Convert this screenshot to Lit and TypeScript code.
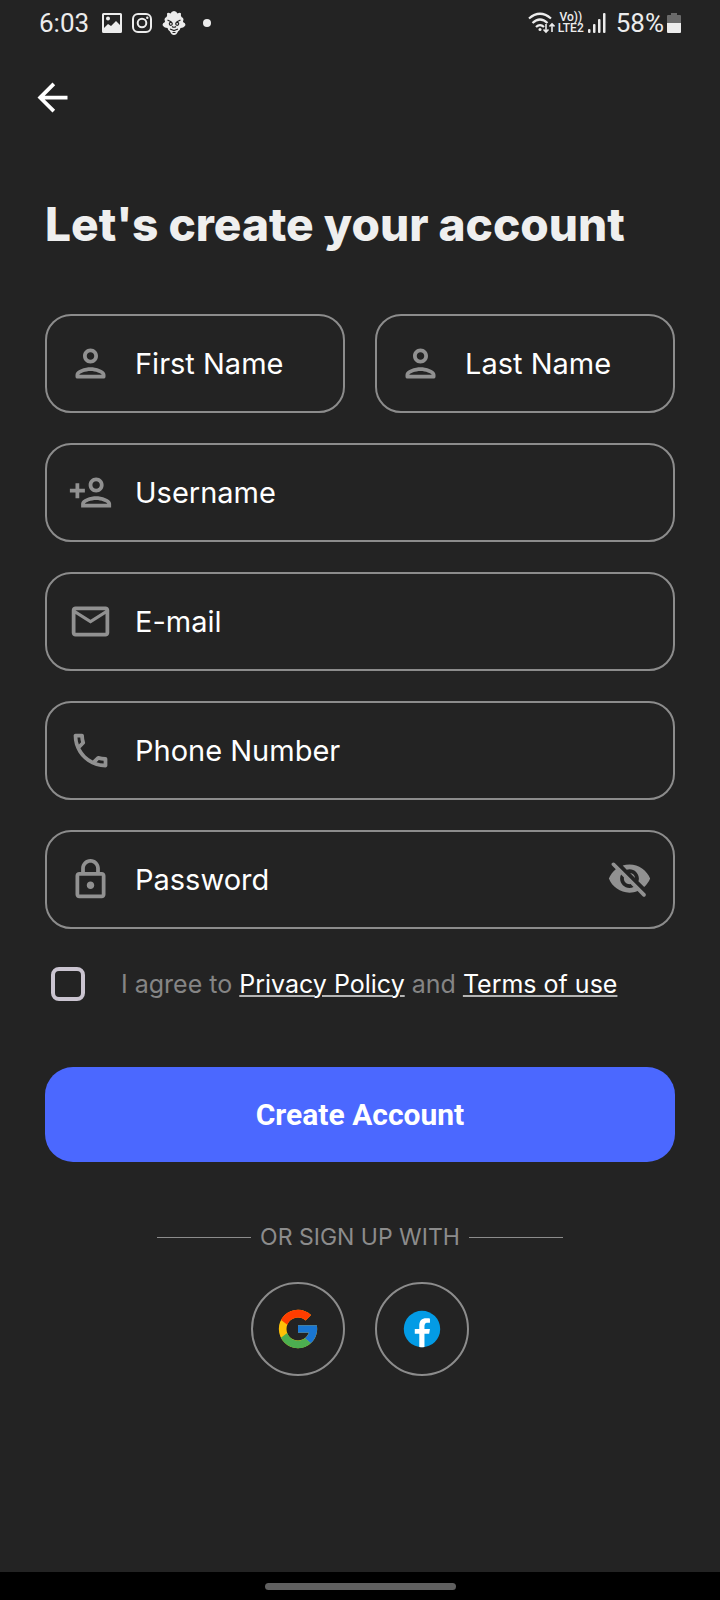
import { LitElement, html, css, svg } from "lit";
import { customElement, property, state } from "lit/decorators.js";

const ICONS: Record<string, string> = {
  back: "M20 11H7.83l5.59-5.59L12 4l-8 8 8 8 1.41-1.41L7.83 13H20v-2z",
  person:
    "M12 6c1.1 0 2 .9 2 2s-.9 2-2 2-2-.9-2-2 .9-2 2-2m0 10c2.7 0 5.8 1.29 6 2H6c.23-.72 3.31-2 6-2m0-12C9.79 4 8 5.79 8 8s1.79 4 4 4 4-1.79 4-4-1.79-4-4-4zm0 10c-2.67 0-8 1.34-8 4v1c0 .55.45 1 1 1h14c.55 0 1-.45 1-1v-1c0-2.66-5.33-4-8-4z",
  personAdd:
    "M15 12c2.21 0 4-1.79 4-4s-1.79-4-4-4-4 1.79-4 4 1.79 4 4 4zm0-6c1.1 0 2 .9 2 2s-.9 2-2 2-2-.9-2-2 .9-2 2-2zm0 8c-2.67 0-8 1.34-8 4v2h16v-2c0-2.66-5.33-4-8-4zm-6 4c.22-.72 3.31-2 6-2 2.7 0 5.8 1.29 6 2H9zm-3-3v-3h3v-2H6V7H4v3H1v2h3v3h2z",
  mail: "M20 4H4c-1.1 0-2 .9-2 2v12c0 1.1.9 2 2 2h16c1.1 0 2-.9 2-2V6c0-1.1-.9-2-2-2zm0 14H4V8l8 5 8-5v10zm-8-7L4 6h16l-8 5z",
  phone:
    "M6.54 5c.06.89.21 1.76.45 2.59l-1.2 1.2c-.41-1.2-.67-2.47-.76-3.79h1.51m9.86 12.02c.85.24 1.72.39 2.6.45v1.49c-1.32-.09-2.59-.35-3.8-.75l1.2-1.19M7.5 3H4c-.55 0-1 .45-1 1 0 9.39 7.61 17 17 17 .55 0 1-.45 1-1v-3.49c0-.55-.45-1-1-1-1.24 0-2.45-.2-3.57-.57-.1-.04-.21-.05-.31-.05-.26 0-.51.1-.71.29l-2.2 2.2c-2.83-1.45-5.15-3.76-6.59-6.59l2.2-2.2c.28-.28.36-.67.25-1.02C8.7 6.45 8.5 5.25 8.5 4c0-.55-.45-1-1-1z",
  lock: "M18 8h-1V6c0-2.76-2.24-5-5-5S7 3.24 7 6v2H6c-1.1 0-2 .9-2 2v10c0 1.1.9 2 2 2h12c1.1 0 2-.9 2-2V10c0-1.1-.9-2-2-2zM9 6c0-1.66 1.34-3 3-3s3 1.34 3 3v2H9V6zm9 14H6V10h12v10zm-6-3c1.1 0 2-.9 2-2s-.9-2-2-2-2 .9-2 2 .9 2 2 2z",
  eyeOff:
    "M12 6.5c2.76 0 5 2.24 5 5 0 .51-.1 1-.24 1.46l3.06 3.06c1.39-1.23 2.49-2.77 3.18-4.53C21.27 7.11 17 4 12 4c-1.27 0-2.49.2-3.64.57l2.17 2.17c.47-.14.96-.24 1.47-.24zM2.71 3.16c-.39.39-.39 1.02 0 1.41l1.97 1.97C3.06 7.83 1.77 9.53 1 11.5 2.73 15.89 7 19 12 19c1.52 0 2.97-.3 4.31-.82l2.72 2.72c.39.39 1.02.39 1.41 0 .39-.39.39-1.02 0-1.41L4.13 3.16c-.39-.39-1.03-.39-1.42 0zM12 16.5c-2.76 0-5-2.24-5-5 0-.77.18-1.5.49-2.14l1.57 1.57c-.03.18-.06.37-.06.57 0 1.66 1.34 3 3 3 .2 0 .38-.03.57-.07L14.14 16c-.65.32-1.37.5-2.14.5zm2.97-5.33c-.15-1.4-1.25-2.49-2.64-2.64l2.64 2.64z",
  eye: "M12 4C7 4 2.73 7.11 1 11.5 2.73 15.89 7 19 12 19s9.27-3.11 11-7.5C21.27 7.11 17 4 12 4zm0 12.5c-2.76 0-5-2.24-5-5s2.24-5 5-5 5 2.24 5 5-2.24 5-5 5zm0-8c-1.66 0-3 1.34-3 3s1.34 3 3 3 3-1.34 3-3-1.34-3-3-3z",
};

const icon = (name: string) => html`
  <svg class="icon" viewBox="0 0 24 24" aria-hidden="true">
    ${svg`<path fill="currentColor" d=${ICONS[name]} />`}
  </svg>
`;

@customElement("status-bar")
class StatusBar extends LitElement {
  static styles = css`
    :host {
      display: flex;
      align-items: center;
      justify-content: space-between;
      height: 45px;
      padding: 0 39px;
      color: #ececec;
      font: 400 26px/32px Roboto, sans-serif;
    }
    .side {
      display: flex;
      align-items: center;
      gap: 10px;
    }
    .side.end {
      gap: 3px;
    }
    svg {
      display: block;
      flex: none;
    }
    .time {
      margin-right: 3px;
    }
    .dot {
      width: 8px;
      height: 8px;
      margin-left: 7px;
      border-radius: 50%;
      background: currentColor;
    }
    .volte {
      display: grid;
      justify-items: center;
      font: 500 12px/11px Roboto, sans-serif;
    }
    .percent {
      margin-left: 6px;
    }
  `;

  render() {
    return html`
      <div class="side">
        <span class="time">6:03</span>
        <svg width="20" height="20" viewBox="0 0 20 20" aria-hidden="true">
          <path
            fill="currentColor"
            fill-rule="evenodd"
            d="M1.500 0h17Q20 0 20 1.500v17q0 1.500-1.500 1.500h-17Q0 20 0 18.500v-17Q0 0 1.500 0zM2 2v13l4-4 3 2 5-5 4 4V2zM4 5.500a2 2 0 1 0 4 0 2 2 0 1 0-4 0z"
          />
        </svg>
        <svg width="20" height="20" viewBox="0 0 20 20" fill="none" stroke="currentColor" stroke-width="2" aria-hidden="true">
          <rect x="1" y="1" width="18" height="18" rx="5" />
          <circle cx="10" cy="10" r="4.300" />
          <circle cx="15.300" cy="4.700" r="1.200" fill="currentColor" stroke="none" />
        </svg>
        <svg width="24" height="24" viewBox="0 0 24 24" aria-hidden="true">
          <path
            fill="currentColor"
            d="M12 0q2.500 0 3.500 2.500Q18 1 19 2.500q-.5 2 .5 3.500 2 .5 2 2.500-.5 1.500-.5 2.500 2.500 1 2.500 3-1.500 3-5 3-.5 2.500-2.500 3.500Q14.500 24 12 24t-4-3.500Q6 19.500 5.500 17 2 17 .5 14q0-2 2.500-3 0-1-.5-2.500 0-2 2-2.500 1-1.500.5-3.500Q6 1 8.500 2.500 9.500 0 12 0z"
          />
          <g fill="none" stroke="#232323" stroke-width="1.200">
            <path d="M5.500 9l4 2M18.500 9l-4 2M10 15.500q2 1.500 4 0M8 18l4 1.500 4-1.500M10.500 21.500h3" />
            <circle cx="8.800" cy="12.800" r="1.500" />
            <circle cx="15.200" cy="12.800" r="1.500" />
          </g>
        </svg>
        <span class="dot"></span>
      </div>
      <div class="side end">
        <svg width="27" height="22" viewBox="0 0 27 22" fill="none" stroke="currentColor" stroke-width="2.200" aria-hidden="true">
          <path d="M1 6.500Q12 -3 23 6.500M4.500 11Q12 4 19.500 11M8 15q4-4 8 0" />
          <circle cx="12" cy="17.500" r="1.500" fill="currentColor" stroke="none" />
          <path stroke-width="1.600" d="M18 12v8M15.500 17.500L18 20l2.500-2.500M24 20v-8M21.500 14.500L24 12l2.500 2.500" />
        </svg>
        <span class="volte"><span>Vo))</span><span>LTE2</span></span>
        <svg width="20" height="20" viewBox="0 0 20 20" fill="currentColor" aria-hidden="true">
          <rect x="1" y="16" width="2.500" height="4" rx="1" />
          <rect x="6" y="11" width="2.500" height="9" rx="1" />
          <rect x="11" y="6" width="2.500" height="14" rx="1" />
          <rect x="16" y="0" width="2.500" height="20" rx="1" />
        </svg>
        <span class="percent">58%</span>
        <svg width="14" height="20" viewBox="0 0 14 20" aria-hidden="true">
          <path fill="#6a6a6a" d="M4 0h6v2h3q1 0 1 1v7H0V3q0-1 1-1h3z" />
          <path fill="currentColor" d="M0 10h14v9q0 1-1 1H1q-1 0-1-1z" />
        </svg>
      </div>
    `;
  }
}

@customElement("text-field")
class TextField extends LitElement {
  @property() label = "";
  @property() icon = "";
  @property() type = "text";
  @state() private revealed = false;

  static styles = css`
    :host {
      display: block;
      min-width: 0;
    }
    .field {
      display: flex;
      align-items: center;
      gap: 22px;
      box-sizing: border-box;
      height: 99px;
      padding: 0 21px;
      border: 2px solid #8c8c8c;
      border-radius: 26px;
      color: #919191;
    }
    .icon {
      display: block;
      flex: none;
      width: 45px;
      height: 45px;
    }
    .input {
      flex: 1;
      min-width: 0;
      padding: 0;
      border: 0;
      outline: 0;
      background: none;
      color: #fff;
      font: 400 29px/40px Inter, sans-serif;
    }
    .input::placeholder {
      color: #fff;
      opacity: 1;
    }
    .toggle {
      flex: none;
      padding: 0;
      border: 0;
      background: none;
      color: inherit;
    }
  `;

  render() {
    const secret = this.type === "password";
    return html`
      <div class="field">
        ${icon(this.icon)}
        <input
          class="input"
          type=${secret && this.revealed ? "text" : this.type}
          placeholder=${this.label}
          aria-label=${this.label}
        />
        ${secret
          ? html`<button
              class="toggle"
              type="button"
              aria-label="Show password"
              aria-pressed=${this.revealed}
              @click=${() => (this.revealed = !this.revealed)}
            >
              ${icon(this.revealed ? "eye" : "eyeOff")}
            </button>`
          : null}
      </div>
    `;
  }
}

@customElement("app-root")
class AppRoot extends LitElement {
  static styles = css`
    :host {
      display: flex;
      flex-direction: column;
      min-height: 100vh;
      background: #232323;
      font-family: Inter, sans-serif;
    }
    .header {
      padding: 30px 30px 0;
    }
    .back {
      display: block;
      padding: 0;
      border: 0;
      background: none;
      color: #fff;
    }
    .icon {
      display: block;
      width: 45px;
      height: 45px;
    }
    .content {
      flex: 1;
      padding: 74px 45px 60px;
    }
    .title {
      margin: 0 0 60px;
      color: #efefef;
      font-size: 46px;
      line-height: 60px;
      font-weight: 800;
    }
    .fields {
      display: grid;
      gap: 30px;
    }
    .names {
      display: grid;
      grid-template-columns: 1fr 1fr;
      gap: 30px;
    }
    .agree {
      display: flex;
      align-items: center;
      gap: 36px;
      height: 45px;
      margin: 32px 0 61px;
      padding-left: 6px;
      color: #858585;
      font-size: 25px;
      line-height: 36px;
    }
    .check {
      flex: none;
      appearance: none;
      width: 34px;
      height: 34px;
      margin: 0;
      border: 4px solid #cac4d0;
      border-radius: 8px;
    }
    .check:checked {
      background: #4b68ff;
    }
    .link {
      color: #fff;
      text-decoration: underline #b4b4b4 2px;
      text-underline-offset: 2px;
    }
    .submit {
      display: block;
      width: 100%;
      height: 95px;
      border: 0;
      border-radius: 28px;
      background: #4b68ff;
      color: #fff;
      font: 700 30px/36px Roboto, sans-serif;
    }
    .divider {
      display: flex;
      align-items: center;
      justify-content: center;
      gap: 9px;
      margin: 60px 0 30px;
      color: #8c8c8c;
      font-size: 23px;
      line-height: 30px;
    }
    .rule {
      width: 94px;
      height: 1px;
      background: #8c8c8c;
    }
    .social {
      display: flex;
      justify-content: center;
      gap: 30px;
    }
    .provider {
      display: grid;
      place-items: center;
      width: 94px;
      height: 94px;
      padding: 0;
      border: 2px solid #8c8c8c;
      border-radius: 50%;
      background: none;
    }
    .logo {
      display: block;
      width: 46px;
      height: 46px;
    }
    .navbar {
      display: grid;
      place-items: center;
      height: 28px;
      background: #000;
    }
    .handle {
      width: 191px;
      height: 7px;
      border-radius: 4px;
      background: #606060;
    }
  `;

  render() {
    return html`
      <status-bar></status-bar>
      <header class="header">
        <button class="back" type="button" aria-label="Back">${icon("back")}</button>
      </header>
      <main class="content">
        <h1 class="title">Let's create your account</h1>
        <form @submit=${(e: Event) => e.preventDefault()}>
          <div class="fields">
            <div class="names">
              <text-field label="First Name" icon="person"></text-field>
              <text-field label="Last Name" icon="person"></text-field>
            </div>
            <text-field label="Username" icon="personAdd"></text-field>
            <text-field label="E-mail" icon="mail" type="email"></text-field>
            <text-field label="Phone Number" icon="phone" type="tel"></text-field>
            <text-field label="Password" icon="lock" type="password"></text-field>
          </div>
          <div class="agree">
            <input class="check" id="agree" type="checkbox" />
            <label for="agree"
              >I agree to <a class="link" href="#privacy">Privacy Policy</a> and
              <a class="link" href="#terms">Terms of use</a></label
            >
          </div>
          <button class="submit" type="submit">Create Account</button>
        </form>
        <div class="divider">
          <span class="rule"></span><span>OR SIGN UP WITH</span><span class="rule"></span>
        </div>
        <div class="social">
          <button class="provider" type="button" aria-label="Google">
            <svg class="logo" viewBox="0 0 48 48" aria-hidden="true">
              <path fill="#ffc107" d="M43.611 20.083H42V20H24v8h11.303c-1.649 4.657-6.080 8-11.303 8-6.627 0-12-5.373-12-12s5.373-12 12-12c3.059 0 5.842 1.154 7.961 3.039l5.657-5.657C34.046 6.053 29.268 4 24 4 12.955 4 4 12.955 4 24s8.955 20 20 20 20-8.955 20-20c0-1.341-.138-2.650-.389-3.917z" />
              <path fill="#ff3d00" d="M6.306 14.691l6.571 4.819C14.655 15.108 18.961 12 24 12c3.059 0 5.842 1.154 7.961 3.039l5.657-5.657C34.046 6.053 29.268 4 24 4 16.318 4 9.656 8.337 6.306 14.691z" />
              <path fill="#4caf50" d="M24 44c5.166 0 9.860-1.977 13.409-5.192l-6.190-5.238C29.211 35.091 26.715 36 24 36c-5.202 0-9.619-3.317-11.283-7.946l-6.522 5.025C9.505 39.556 16.227 44 24 44z" />
              <path fill="#1976d2" d="M43.611 20.083H42V20H24v8h11.303c-.792 2.237-2.231 4.166-4.087 5.571l6.193 5.238C36.971 39.205 44 34 44 24c0-1.341-.138-2.650-.389-3.917z" />
            </svg>
          </button>
          <button class="provider" type="button" aria-label="Facebook">
            <svg class="logo" viewBox="0 0 48 48" aria-hidden="true">
              <circle cx="24" cy="24" r="19" fill="#039be5" />
              <path fill="#fff" d="M26.572 29.036h4.917l.772-4.995h-5.690v-2.730c0-2.075.678-3.915 2.619-3.915h3.119v-4.359c-.548-.074-1.707-.236-3.897-.236-4.573 0-7.254 2.415-7.254 7.917v3.323h-4.701v4.995h4.701v13.729c.931.140 1.874.235 2.842.235.875 0 1.729-.08 2.572-.194z" />
            </svg>
          </button>
        </div>
      </main>
      <div class="navbar"><span class="handle"></span></div>
    `;
  }
}
